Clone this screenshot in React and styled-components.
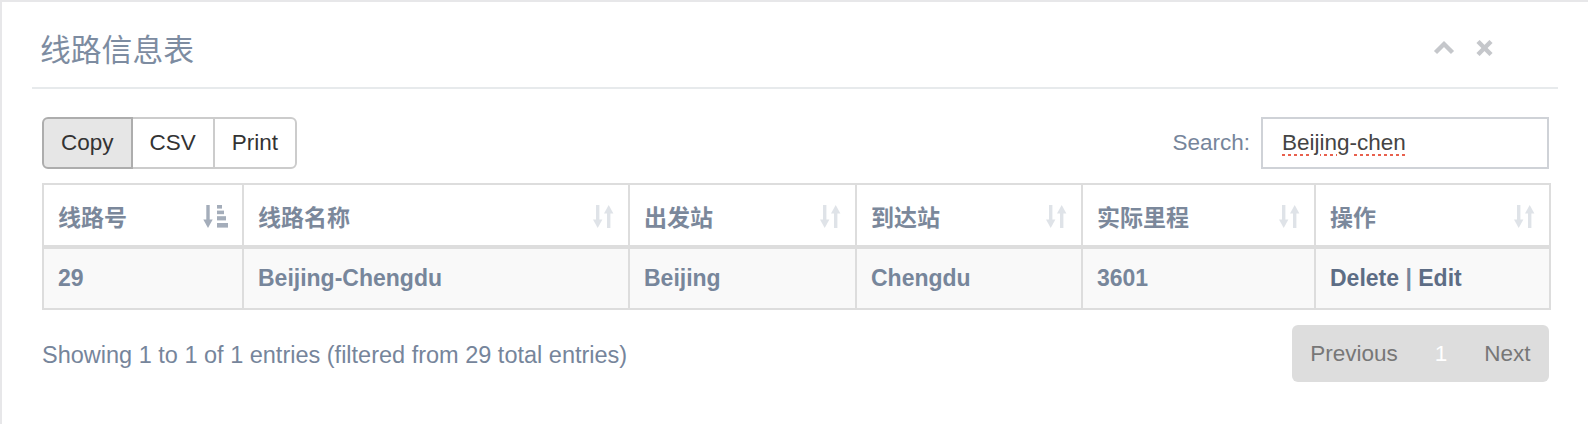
import styled, { createGlobalStyle } from "styled-components";

const GlobalStyle = createGlobalStyle`
    html, body {
        margin: 0;
        padding: 0;
        background: #e7e7e9;
    }
    body {
        font-family: "Liberation Sans", "Noto Sans CJK SC", Arial, sans-serif;
        color: #76859b;
    }
    * {
        box-sizing: border-box;
    }
`;

const columns = [
    { title: "线路号", width: 200, sorted: true },
    { title: "线路名称", width: 386 },
    { title: "出发站", width: 227 },
    { title: "到达站", width: 226 },
    { title: "实际里程", width: 233 },
    { title: "操作", width: 235 },
];

const rows = [
    { id: "29", name: "Beijing-Chengdu", from: "Beijing", to: "Chengdu", miles: "3601" },
];

const SortIcon = () => (
    <svg width="21" height="23" viewBox="0 0 21 23" fill="#dfe3e8">
        <rect x="3" y="0" width="3.4" height="16" />
        <polygon points="0,14.5 9.4,14.5 4.7,23" />
        <polygon points="11,8.5 20.4,8.5 15.7,0" />
        <rect x="14" y="7" width="3.4" height="16" />
    </svg>
);

const SortAscIcon = () => (
    <svg width="25" height="23" viewBox="0 0 25 23" fill="#a4adba">
        <rect x="3.3" y="0" width="3.4" height="16" />
        <polygon points="0.3,14.5 9.7,14.5 5,23" />
        <rect x="14" y="0" width="5" height="3.6" />
        <rect x="14" y="5.6" width="7" height="3.6" />
        <rect x="14" y="11.2" width="9" height="4.2" />
        <rect x="14" y="18" width="11" height="4.6" />
    </svg>
);

const ChevronIcon = () => (
    <svg width="22" height="15" viewBox="0 0 22 15" fill="none" stroke="#c5c7cb" strokeWidth="4.4">
        <polyline points="2.5,12.5 11,4 19.5,12.5" />
    </svg>
);

const CloseIcon = () => (
    <svg width="17" height="16" viewBox="0 0 17 16" fill="none" stroke="#c5c7cb" strokeWidth="4.4">
        <line x1="2" y1="1.5" x2="15" y2="14.5" />
        <line x1="15" y1="1.5" x2="2" y2="14.5" />
    </svg>
);

const App = () => {
    return (
        <>
        <GlobalStyle />
        <StPanel>
            <StHeader>
                <h5>线路信息表</h5>
                <StTools>
                    <ChevronIcon />
                    <CloseIcon />
                </StTools>
            </StHeader>

            <StBody>
                <StToolbar>
                    <StButtonGroup>
                        <StButton active>Copy</StButton>
                        <StButton>CSV</StButton>
                        <StButton>Print</StButton>
                    </StButtonGroup>
                    <StSearch>
                        Search:
                        <StSearchInput defaultValue="Beijing-chen" spellCheck={false} />
                    </StSearch>
                </StToolbar>

                <StTable>
                    <thead>
                        <tr>
                            {columns.map((col) => (
                                <StTh key={col.title} width={col.width}>
                                    <StThInner>
                                        {col.title}
                                        {col.sorted ? <SortAscIcon /> : <SortIcon />}
                                    </StThInner>
                                </StTh>
                            ))}
                        </tr>
                    </thead>
                    <tbody>
                        {rows.map((row) => (
                            <tr key={row.id}>
                                <StTd>{row.id}</StTd>
                                <StTd>{row.name}</StTd>
                                <StTd>{row.from}</StTd>
                                <StTd>{row.to}</StTd>
                                <StTd>{row.miles}</StTd>
                                <StTd>
                                    <StLink>Delete</StLink> | <StLink>Edit</StLink>
                                </StTd>
                            </tr>
                        ))}
                    </tbody>
                </StTable>

                <StFooter>
                    <p>Showing 1 to 1 of 1 entries (filtered from 29 total entries)</p>
                    <StPagination>
                        <StPageItem>Previous</StPageItem>
                        <StPageItem current>1</StPageItem>
                        <StPageItem>Next</StPageItem>
                    </StPagination>
                </StFooter>
            </StBody>
        </StPanel>
        </>
    );
};

export default App;

const StPanel = styled.section`
    margin: 2px 0 0 2px;
    min-height: calc(100vh - 2px);
    padding: 0 30px;
    background: #ffffff;
`
const StHeader = styled.header`
    display: flex;
    justify-content: space-between;
    align-items: center;

    height: 87px;
    padding: 6px 65px 0 8px;
    border-bottom: 2px solid #e7eaec;

    & > h5 {
        margin: 0;
        font-size: 30.8px;
        font-weight: 400;
        color: #7d8ca1;
    }
`
const StTools = styled.div`
    display: flex;
    align-items: center;
    gap: 21px;
`
const StBody = styled.div`
    padding: 28px 9px 0 10px;
`
const StToolbar = styled.div`
    display: flex;
    justify-content: space-between;
    align-items: center;
`
const StButtonGroup = styled.div`
    display: flex;
`
const StButton = styled.button`
    height: 52px;
    padding: 0 17px;
    margin-left: -2px;

    border: 2px solid ${({ active }) => (active ? "#adadad" : "#cccccc")};
    background: ${({ active }) => (active ? "#e6e6e6" : "#ffffff")};
    color: #333333;
    font-family: inherit;
    font-size: 22.5px;
    position: relative;
    z-index: ${({ active }) => (active ? 1 : 0)};

    &:first-child {
        margin-left: 0;
        border-radius: 6px 0 0 6px;
    }
    &:last-child {
        border-radius: 0 6px 6px 0;
    }
`
const StSearch = styled.label`
    display: flex;
    align-items: center;
    gap: 11px;
    font-size: 22.5px;
    color: #76859b;
`
const StSearchInput = styled.input`
    width: 288px;
    height: 52px;
    padding: 0 19px;
    border: 2px solid #cfd2d7;
    outline: none;

    font-family: inherit;
    font-size: 22.5px;
    color: #444444;
    text-decoration-line: underline;
    text-decoration-style: dotted;
    text-decoration-color: #e8614e;
    text-decoration-thickness: 3px;
    text-underline-offset: 4px;
`
const StTable = styled.table`
    width: 1508px;
    margin-top: 14px;
    border-collapse: collapse;
    table-layout: fixed;
    font-size: 23px;
`
const StTh = styled.th`
    width: ${({ width }) => width}px;
    height: 63px;
    padding: 0 14px;

    border: 2px solid #dddddd;
    border-bottom-width: 4px;
    background: #ffffff;
    text-align: left;
    font-weight: 700;
    color: #7b889b;
`
const StThInner = styled.div`
    display: flex;
    justify-content: space-between;
    align-items: center;
    padding-top: 2px;
`
const StTd = styled.td`
    height: 62px;
    padding: 0 14px;

    border: 2px solid #dddddd;
    background: #f9f9f9;
    font-weight: 700;
    color: #77869b;
`
const StLink = styled.a`
    color: #5d6d85;
    cursor: pointer;
`
const StFooter = styled.footer`
    display: flex;
    justify-content: space-between;
    align-items: center;
    margin-top: 15px;

    & > p {
        margin: 3px 0 0;
        font-size: 23.5px;
        color: #76859b;
    }
`
const StPagination = styled.ul`
    display: flex;
    margin: 0;
    padding: 0;
    list-style: none;

    border-radius: 6px;
    background: #dddddd;
    overflow: hidden;
`
const StPageItem = styled.li`
    height: 57px;
    padding: 0 18.5px;
    line-height: 57px;
    font-size: 22.5px;
    color: ${({ current }) => (current ? "#ffffff" : "#777777")};
`
